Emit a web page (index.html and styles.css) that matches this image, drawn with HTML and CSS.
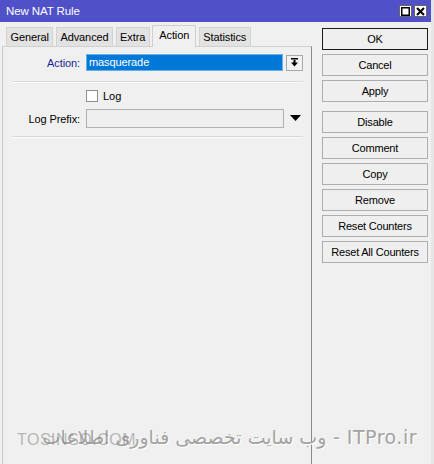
FILE: index.html
```html
<!DOCTYPE html>
<html>
<head>
<meta charset="utf-8">
<link rel="stylesheet" href="styles.css">
</head>
<body>
<div class="window">
  <div class="titlebar">
    <span class="title">New NAT Rule</span>
    <div class="tb-buttons">
      <span class="tb-btn"><svg width="9" height="9" viewBox="0 0 9 9"><rect x="0.75" y="0.75" width="7.5" height="7.5" fill="none" stroke="#000" stroke-width="1.5"/></svg></span>
      <span class="tb-btn"><svg width="9" height="9" viewBox="0 0 9 9"><path d="M1 1 L8 8 M8 1 L1 8" stroke="#000" stroke-width="2"/></svg></span>
    </div>
  </div>
  <div class="main">
    <div class="left">
      <div class="tabs">
        <span class="tab">General</span>
        <span class="tab">Advanced</span>
        <span class="tab">Extra</span>
        <span class="tab active">Action</span>
        <span class="tab">Statistics</span>
      </div>
      <div class="panel">
        <div class="row row-action">
          <span class="label blue">Action:</span>
          <span class="select">masquerade</span>
          <span class="dd-btn"><svg width="9" height="9" viewBox="0 0 9 9"><rect x="1" y="0" width="7" height="1.5" fill="#000"/><rect x="3.5" y="2" width="2" height="3" fill="#000"/><path d="M1 4.5 H8 L4.5 8.5 Z" fill="#000"/></svg></span>
        </div>
        <div class="sep"></div>
        <div class="row row-log">
          <span class="label"></span>
          <span class="check"></span>
          <span class="check-label">Log</span>
        </div>
        <div class="row row-prefix">
          <span class="label">Log Prefix:</span>
          <span class="input"></span>
          <span class="tri"><svg width="11" height="7" viewBox="0 0 11 7"><path d="M0 0 H11 L5.5 6 Z" fill="#000"/></svg></span>
        </div>
        <div class="sep sep2"></div>
      </div>
    </div>
    <div class="right">
      <span class="btn default">OK</span>
      <span class="btn">Cancel</span>
      <span class="btn">Apply</span>
      <span class="btn spaced">Disable</span>
      <span class="btn">Comment</span>
      <span class="btn">Copy</span>
      <span class="btn">Remove</span>
      <span class="btn">Reset Counters</span>
      <span class="btn">Reset All Counters</span>
    </div>
  </div>
  <div class="watermark">
    <span class="wm-main" dir="rtl">ITPro.ir - وب سایت تخصصی فناوری اطلاعات</span>
    <span class="wm-ghost">TOSINSO.COM</span>
  </div>
</div>
</body>
</html>
```

FILE: styles.css
```css
* { box-sizing: border-box; }
html, body { margin: 0; padding: 0; }
body {
  background: #f0f0f0;
  font-family: "Liberation Sans", Arial, sans-serif;
  font-size: 11px;
  color: #000;
}
.window {
  width: 434px;
  height: 464px;
  display: flex;
  flex-direction: column;
  position: relative;
  overflow: hidden;
  border-right: 3px solid #e6e6e6;
}
.titlebar {
  height: 22px;
  background: #5050c8;
  color: #fff;
  display: flex;
  align-items: center;
  justify-content: space-between;
  padding: 0 4px 0 6px;
  flex-shrink: 0;
}
.title { font-size: 11.5px; letter-spacing: -0.1px; }
.tb-buttons { display: flex; gap: 2px; }
.tb-btn {
  width: 13px;
  height: 12px;
  background: #fff;
  border: 1px solid #666;
  display: flex;
  align-items: center;
  justify-content: center;
}
.tb-btn svg { display: block; }
.main {
  flex: 1;
  display: flex;
}
.left {
  width: 312px;
  display: flex;
  flex-direction: column;
  padding-left: 2px;
}
.tabs {
  display: flex;
  align-items: flex-end;
  gap: 2.5px;
  padding-left: 4px;
  height: 24px;
}
.tab {
  height: 19px;
  padding: 0 3.5px;
  background: #e2e2e2;
  border: 1px solid #d2d2d2;
  border-bottom: none;
  display: flex;
  align-items: center;
  letter-spacing: -0.1px;
  font-size: 11px;
}
.tab.active {
  height: 22px;
  background: #f0f0f0;
  border-color: #cfcfcf;
  padding: 3px 6px 0;
  align-items: flex-start;
  margin-bottom: -1px;
  position: relative;
}
.panel {
  flex: 1;
  border-top: 1px solid #d0d0d0;
  border-right: 1px solid #8a8a8a;
  border-left: 1px solid #c8c8c8;
  padding: 7px 0 0 0;
}
.row {
  display: flex;
  align-items: center;
}
.label {
  width: 77px;
  text-align: right;
  margin-right: 6px;
  font-size: 11px;
  letter-spacing: -0.1px;
}
.blue { color: #1e1e96; }
.row-action { height: 17px; }
.select {
  width: 197px;
  height: 17px;
  background: #0078d7;
  color: #fff;
  border: 1px solid #6aaee8;
  padding-left: 2px;
  line-height: 15px;
  font-size: 11px;
  letter-spacing: -0.1px;
}
.dd-btn {
  width: 17px;
  height: 16px;
  margin-left: 3px;
  border: 1px solid #a8a8a8;
  background: #f2f2f2;
  display: flex;
  align-items: center;
  justify-content: center;
}
.dd-btn svg, .tri svg { display: block; }
.sep {
  margin: 10px 8px 0 9px;
  height: 2px;
  border-top: 1px solid #d8d8d8;
  border-bottom: 1px solid #fbfbfb;
}
.sep2 { margin-top: 8px; }
.row-log { height: 13px; margin-top: 6px; }
.check {
  width: 12px;
  height: 12px;
  border: 1px solid #8f8f8f;
  background: #fff;
}
.check-label { margin-left: 5px; font-size: 11px; }
.row-prefix { height: 19px; margin-top: 7px; }
.input {
  width: 198px;
  height: 19px;
  border: 1px solid #b0b0b0;
  background: #efefef;
}
.tri {
  margin-left: 6px;
  display: flex;
  align-items: center;
}
.right {
  flex: 1;
  display: flex;
  flex-direction: column;
  gap: 4px;
  padding: 6px 0 0 10px;
}
.btn {
  width: 106px;
  height: 22px;
  border: 1px solid #adadad;
  background: #efefef;
  display: flex;
  align-items: center;
  justify-content: center;
  font-size: 11px;
  letter-spacing: -0.2px;
}
.btn.default { border: 1px solid #1a1a1a; }
.btn.spaced { margin-top: 5px; }
.watermark {
  position: absolute;
  left: 17px;
  top: 426px;
  width: 400px;
  height: 28px;
}
.wm-main {
  position: absolute;
  right: 0;
  top: 0;
  font-family: "DejaVu Sans", "Liberation Sans", sans-serif;
  font-size: 19px;
  color: #a3a3a3;
  text-shadow: 1px 1px 0 #ffffff;
  white-space: nowrap;
  letter-spacing: 0.5px;
}
.wm-ghost {
  position: absolute;
  left: 0;
  top: 5px;
  font-size: 16px;
  color: rgba(130,130,130,0.55);
  letter-spacing: 0.5px;
  white-space: nowrap;
}
```
